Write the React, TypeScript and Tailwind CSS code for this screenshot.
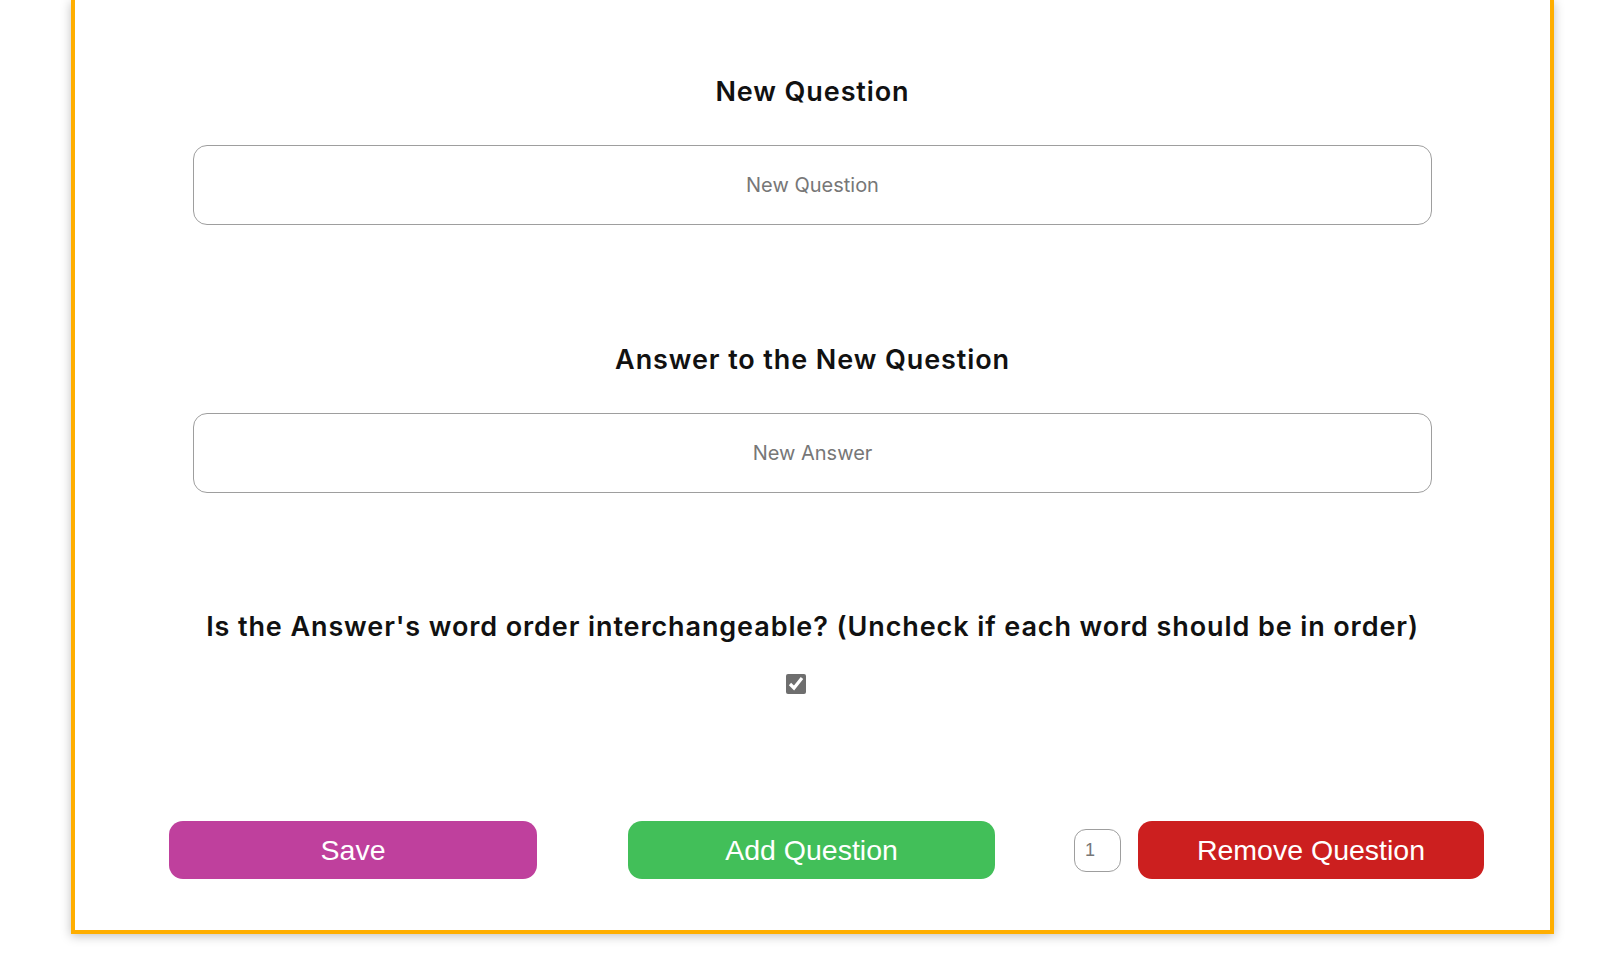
import { useState } from "react";

const headingClass =
  "font-['Inter',sans-serif] font-semibold text-[27px] leading-[32px] tracking-[0.9px] text-[#111] text-center";

const fieldClass =
  "w-[1239px] h-[80px] rounded-[14px] border-[1.5px] border-[#9e9e9e] bg-white text-center font-['Inter',sans-serif] text-[20px] text-[#333] placeholder:text-[#777] outline-none";

export default function App() {
  const [question, setQuestion] = useState("");
  const [answer, setAnswer] = useState("");
  const [interchangeable, setInterchangeable] = useState(true);
  const [count, setCount] = useState("1");

  return (
    <div className="min-h-screen w-full bg-white pl-[71px]">
      <div className="w-[1483px] border-4 border-t-0 border-[#ffae00] bg-white pt-[76px] pb-[51px] shadow-[0_2px_10px_rgba(0,0,0,0.25)]">
        <div className="flex flex-col items-center">
          {/* Question */}
          <h2 className={headingClass}>New Question</h2>
          <input
            className={`${fieldClass} mt-[37px]`}
            placeholder="New Question"
            value={question}
            onChange={(e) => setQuestion(e.target.value)}
          />

          {/* Answer */}
          <h2 className={`${headingClass} mt-[119px]`}>Answer to the New Question</h2>
          <input
            className={`${fieldClass} mt-[37px]`}
            placeholder="New Answer"
            value={answer}
            onChange={(e) => setAnswer(e.target.value)}
          />

          {/* Word order */}
          <h2 className={`${headingClass} mt-[118px]`}>
            Is the Answer's word order interchangeable? (Uncheck if each word should be in order)
          </h2>
          <input
            type="checkbox"
            checked={interchangeable}
            onChange={(e) => setInterchangeable(e.target.checked)}
            className="mt-[31px] mr-[34px] h-5 w-5 accent-[#6e6e6e]"
          />
        </div>

        {/* Actions */}
        <div className="mt-[127px] flex items-center pl-[94px]">
          <button className="h-[58px] w-[368px] rounded-[14px] bg-[#bf409d] font-['Liberation_Sans',Arial,sans-serif] text-[28.5px] text-white">
            Save
          </button>
          <button className="ml-[91px] h-[58px] w-[367px] rounded-[14px] bg-[#42bf59] font-['Liberation_Sans',Arial,sans-serif] text-[28.5px] text-white">
            Add Question
          </button>
          <input
            type="text"
            value={count}
            onChange={(e) => setCount(e.target.value)}
            className="ml-[79px] h-[43px] w-[47px] rounded-[12px] border-[1.5px] border-[#9e9e9e] px-[10px] font-['Liberation_Sans',Arial,sans-serif] text-[18px] text-[#777] outline-none"
          />
          <button className="ml-[17px] h-[58px] w-[346px] rounded-[14px] bg-[#cc1f1f] font-['Liberation_Sans',Arial,sans-serif] text-[28.5px] text-white">
            Remove Question
          </button>
        </div>
      </div>
    </div>
  );
}
